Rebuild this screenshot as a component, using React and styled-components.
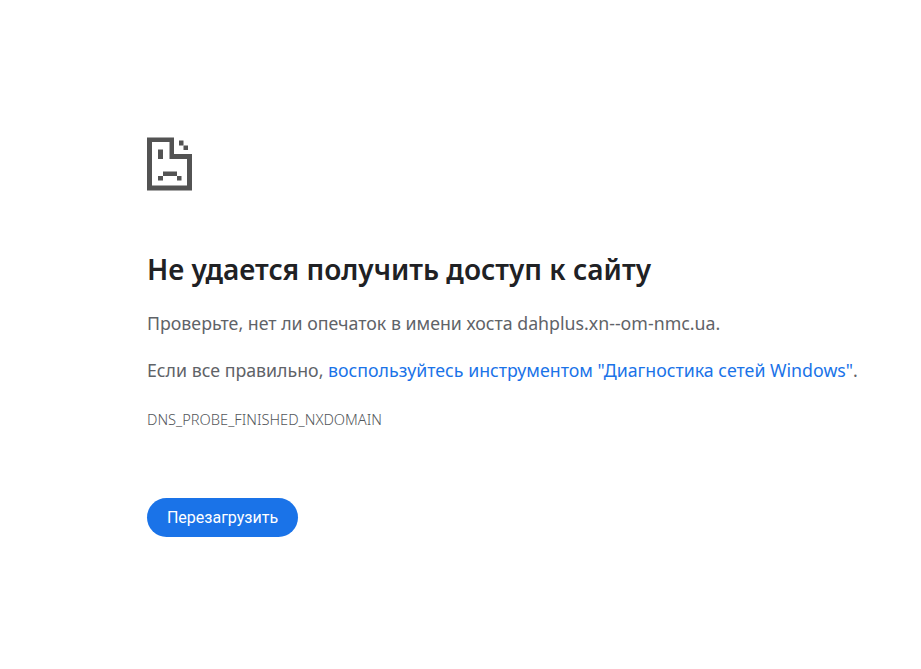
import React from 'react'
import styled, { createGlobalStyle } from 'styled-components'

const GlobalStyle = createGlobalStyle`
    html, body {
        margin: 0;
        background: #ffffff;
    }
`

const SadTab = () => (
    <svg width="45" height="54" viewBox="0 0 45 54" fill="#535353">
        <path d="M0 0.4H27V17H45V53.5H0ZM5 5V48.5H40V22H22.5V5Z" fillRule="evenodd" />
        <rect x="32" y="3.5" width="4.5" height="5" />
        <rect x="36.5" y="8.5" width="4.5" height="4.5" />
        <rect x="11" y="12.5" width="5" height="9.5" />
        <rect x="16" y="34.5" width="14" height="4.5" />
        <rect x="11" y="39" width="5" height="4.5" />
        <rect x="30" y="39" width="4.5" height="4.5" />
    </svg>
)

const App = () => {
    return (
        <Page>
            <GlobalStyle />
            <IconWrap>
                <SadTab />
            </IconWrap>
            <Title>Не удается получить доступ к сайту</Title>
            <Text>Проверьте, нет ли опечаток в имени хоста dahplus.xn--om-nmc.ua.</Text>
            <Text>
                Если все правильно, <Link href="#">воспользуйтесь инструментом "Диагностика сетей Windows"</Link>.
            </Text>
            <ErrorCode>DNS_PROBE_FINISHED_NXDOMAIN</ErrorCode>
            <ReloadButton>Перезагрузить</ReloadButton>
        </Page>
    )
}

// styled component
const Page = styled.div`
    box-sizing: border-box;
    width: 921px;
    height: 669px;
    padding: 137px 0 0 147px;
    overflow: hidden;
    font-family: "Noto Sans", "Open Sans", sans-serif;
    color: #5f6368;
`

const IconWrap = styled.div`
    width: 45px;
    height: 54px;
    svg {
        display: block;
    }
`

const Title = styled.h1`
    margin: 56px 0 0;
    font-size: 28px;
    line-height: 44px;
    font-weight: 600;
    color: #202124;
`

const Text = styled.p`
    margin: 0 0 23px;
    font-size: 17.75px;
    line-height: 24px;
    white-space: nowrap;
    &:first-of-type {
        margin-top: 20px;
    }
`

const Link = styled.a`
    color: #1a73e8;
    text-decoration: none;
`

const ErrorCode = styled.div`
    margin-top: 27px;
    font-size: 14.65px;
    line-height: 20px;
    font-weight: 300;
    color: #53575b;
`

const ReloadButton = styled.button`
    display: block;
    width: 151px;
    height: 39px;
    margin-top: 69px;
    padding: 0;
    border: none;
    border-radius: 20px;
    background: #1a73e8;
    color: #ffffff;
    font-family: Roboto, sans-serif;
    font-size: 16px;
    font-weight: 400;
`

export default App
